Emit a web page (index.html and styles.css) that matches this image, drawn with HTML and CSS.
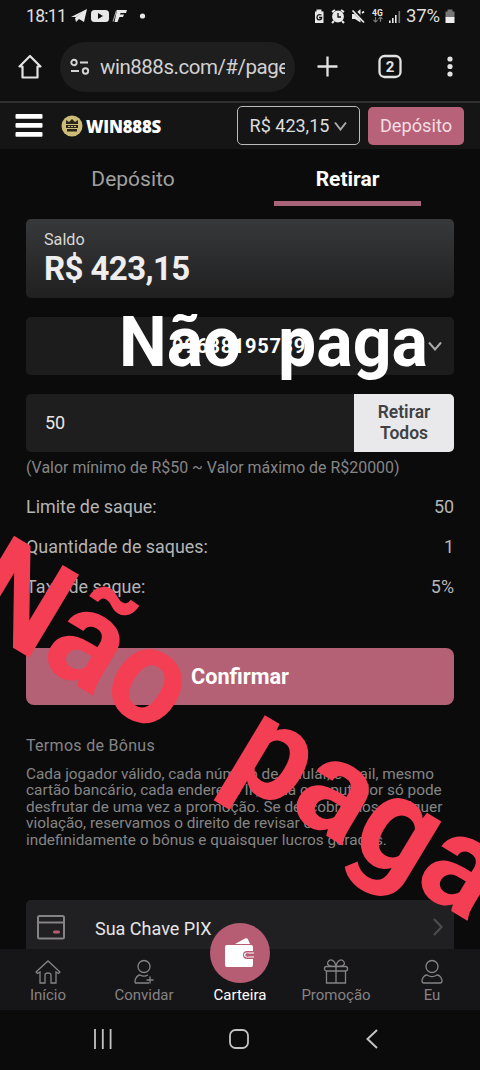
FILE: index.html
```html
<!DOCTYPE html>
<html lang="pt-BR">
<head>
<meta charset="utf-8">
<title>WIN888S</title>
<link rel="stylesheet" href="styles.css">
</head>
<body>
<div class="phone">
  <div class="status">
    <span class="clock">18:11</span>
    <svg width="78" height="18" viewBox="0 0 78 18" fill="#e8e8e8">
      <path d="M0 10 16 2l-3 13-5-3-3 3-1-4 9-7-8 6z"/>
      <rect x="20" y="3" width="18" height="12" rx="3.5"/><path d="m27 6 5 3-5 3z" fill="#101010"/>
      <path d="M46 3h10l-1 3h-5.500l-.5 1.500h4L52 10h-3.500L46.500 15h-3z"/><path d="M45.500 3.500 42 14.500" stroke="#bbb" stroke-width="1"/>
      <circle cx="71.500" cy="9" r="2.600"/>
    </svg>
    <span class="grow"></span>
    <svg width="90" height="18" viewBox="0 0 90 18" fill="#e8e8e8">
      <path d="M1 4.500h1.500v-2h5v2H9.500v11.500H1z"/><path d="M7.500 8c-3-1-4.500 0-4.500 2.500 0 1.500 1 2.300 2.300 2.300s2.300-1 2.300-2.300H5" fill="none" stroke="#101010" stroke-width="1.300"/>
      <circle cx="24" cy="9.500" r="5.900"/><path d="m18 5 3-2M30 5l-3-2M20 14l-2 2M28 14l2 2" stroke="#e8e8e8" stroke-width="2"/><path d="M24 6v4h3" fill="none" stroke="#101010" stroke-width="1.300"/>
      <path d="M38 7h3l5.500-5v13.500L41 12h-3z"/><path d="m38.500 2.500 12 12" stroke="#101010" stroke-width="3.500"/><path d="m38.500 3.500 11.500 12M48 6l2-1.500" stroke="#e8e8e8" stroke-width="1.800"/>
      <text x="58" y="8.500" class="net">4G</text>
      <path d="M61.500 10v5M59.500 13l2 2 2-2M66.500 15v-5M64.500 12l2-2 2 2" fill="none" stroke="#777" stroke-width="1.100"/>
      <path d="M75 13.500h1.600v2.500H75zM78 11h1.600v5H78zM81 8h1.600v8H81z"/><path d="M84.500 4h1.600v12h-1.600z" fill="#777"/>
    </svg>
    <span class="percent">37%</span>
    <svg width="10" height="16" viewBox="0 0 10 16"><path d="M2.500 1.500h5v2h2v6H.5v-6h2z" fill="#777"/><path d="M.5 9h9v6H.5z" fill="#eee"/></svg>
  </div>

  <div class="browser">
    <svg class="home" width="24" height="26" viewBox="0 0 24 26" fill="none" stroke="#e2e2e2" stroke-width="2.200" stroke-linejoin="round"><path d="M1.500 12.500 12 2l10.500 10.500H19.500V23.500h-15v-11z"/></svg>
    <div class="address">
      <svg width="20" height="18" viewBox="0 0 20 18" fill="none" stroke="#d5d5d5" stroke-width="1.900"><circle cx="4" cy="4.500" r="2.700"/><path d="M10 4.500h8M1 13h8"/><circle cx="15.500" cy="13" r="2.700"/></svg>
      <span class="url">win888s.com/#/page</span>
    </div>
    <svg class="tools" width="140" height="28" viewBox="0 0 140 28" fill="none" stroke="#e2e2e2" stroke-width="2.300">
      <path d="M.5 13.500h20M10.500 3.500v20"/><rect x="62.500" y="3" width="21" height="21" rx="5"/><text x="73" y="18.800" class="tabs">2</text>
      <g fill="#e2e2e2" stroke="none"><circle cx="133" cy="6" r="2.600"/><circle cx="133" cy="13.500" r="2.600"/><circle cx="133" cy="21" r="2.600"/></g>
    </svg>
  </div>

  <header class="header">
    <svg width="28" height="26" viewBox="0 0 28 26" fill="#fff"><rect x=".5" y="1" width="27" height="4.800" rx="1"/><rect x=".5" y="10" width="27" height="4.800" rx="1"/><rect x=".5" y="19" width="27" height="4.800" rx="1"/></svg>
    <svg class="logo" width="22" height="22" viewBox="0 0 22 22"><circle cx="11" cy="11" r="10.500" fill="#cdbb78"/><path d="m5 5 3 2 3-3 3 3 3-2v4H5zM5 10h12v3H5zM6 14h10v2.500H6z" fill="#29251a"/><path d="M7 11.500h2m1 0h2m1 0h2" stroke="#cdbb78"/></svg>
    <span class="brand">WIN888S</span>
    <div class="balance">R$ 423,15 <svg width="13" height="10" viewBox="0 0 13 10" fill="none" stroke="#aaa" stroke-width="2"><path d="m1 1.500 5.500 7 5.500-7"/></svg></div>
    <div class="deposit">Depósito</div>
  </header>

  <main class="main">
    <nav class="switch"><span class="tab">Depósito</span><span class="tab active">Retirar</span></nav>
    <section class="saldo"><div class="label">Saldo</div><div class="amount">R$ 423,15</div></section>
    <div class="account"><span>09638195739</span><svg width="14" height="10" viewBox="0 0 14 10" fill="none" stroke="#aaa" stroke-width="2"><path d="m1 1.500 6 7 6-7"/></svg></div>
    <div class="withdraw"><div class="value">50</div><div class="all">Retirar<br>Todos</div></div>
    <p class="hint">(Valor mínimo de R$50 ~ Valor máximo de R$20000)</p>
    <div class="facts">
      <div class="row"><span>Limite de saque:</span><span>50</span></div>
      <div class="row"><span>Quantidade de saques:</span><span>1</span></div>
      <div class="row"><span>Taxa de saque:</span><span>5%</span></div>
    </div>
    <div class="confirm">Confirmar</div>
    <h2 class="terms-title">Termos de Bônus</h2>
    <p class="terms">Cada jogador válido, cada número de celular, e-mail, mesmo<br>cartão bancário, cada endereço IP, cada computador só pode<br>desfrutar de uma vez a promoção. Se descobrirmos qualquer<br>violação, reservamos o direito de revisar ou<br>indefinidamente o bônus e quaisquer lucros gerados.</p>
    <div class="pix">
      <svg width="28" height="25" viewBox="0 0 28 25" fill="none" stroke="#858386" stroke-width="2"><rect x="1" y="1" width="26" height="22.500" rx="1.500"/><path d="M1 7.500h26"/><path d="M17.500 17h4" stroke="#b65d73" stroke-width="3" stroke-linecap="round"/></svg>
      <span>Sua Chave PIX</span>
      <svg width="12" height="20" viewBox="0 0 12 20" fill="none" stroke="#4c4b4d" stroke-width="2.200"><path d="m2 2 7.500 8L2 18"/></svg>
    </div>
  </main>

  <nav class="bottom">
    <div class="item"><svg width="26" height="26" viewBox="0 0 26 26"><path d="M1 13 13 2l12 11-1.500 1.500L21 13v11h-5v-8q0-2-3-2t-3 2v8H5V13l-2.500 1.500z"/></svg><span>Início</span></div>
    <div class="item"><svg width="26" height="26" viewBox="0 0 26 26"><circle cx="13" cy="7.500" r="6"/><path d="M18 24H4.500c-1.500-2 1-8 4.500-8 2.500 1.500 5.500 1.500 8 0M15.500 21h7M19 17.500v7"/></svg><span>Convidar</span></div>
    <div class="item current"><div class="wallet"><svg width="32" height="32" viewBox="0 0 32 32"><path d="m11 7 10-5.500q2-1 3 1L26 7z" fill="#fff"/><path d="M3 8h24q2 0 2 2v4h-6q-4 0-4 4t4 4h6v6q0 2-2 2H3q-2 0-2-2V10q0-2 2-2z" fill="#fff"/><path d="M30 15.500h-7.500a2.500 2.500 0 0 0 0 5H30z" fill="#fff"/><path d="M23 16.500h7v3h-7z" fill="#b65d73"/><circle cx="23" cy="18" r="1.700" fill="#b65d73"/></svg></div><span>Carteira</span></div>
    <div class="item"><svg width="26" height="26" viewBox="0 0 26 26"><rect x="1.500" y="7.500" width="23" height="4.500" rx="2"/><path d="M3.500 12v12h19V12M13 7.500V24M13 7.500C9 7.500 3 7 5 3s7-2 8 4.500c1-6.500 6-8.500 8-4.500s-4 4.500-8 4.500z"/></svg><span>Promoção</span></div>
    <div class="item"><svg width="26" height="26" viewBox="0 0 26 26"><circle cx="13" cy="7.500" r="6"/><path d="M8 16c3 2 7 2 10 0 3 0 5 3.500 5 6q0 2-2 2H5q-2 0-2-2c0-2.500 2-6 5-6z"/></svg><span>Eu</span></div>
  </nav>

  <footer class="system">
    <svg width="20" height="20" viewBox="0 0 20 20" stroke="#c2c2c2" stroke-width="1.800"><path d="M2 0v20M9.800 0v20M17.600 0v20"/></svg>
    <svg width="20" height="20" viewBox="0 0 20 20" fill="none" stroke="#c2c2c2" stroke-width="1.800"><rect x="1" y="1" width="18" height="18" rx="5.500"/></svg>
    <svg width="14" height="20" viewBox="0 0 14 20" fill="none" stroke="#c2c2c2" stroke-width="2"><path d="M12 1 2.500 10 12 19"/></svg>
  </footer>

  <svg class="stamps" width="480" height="1070" viewBox="0 0 480 1070">
    <g class="stamp" fill="#fff"><text x="119" y="365.500" textLength="122" lengthAdjust="spacingAndGlyphs">Não</text><text x="278" y="365.500" textLength="150" lengthAdjust="spacingAndGlyphs">paga</text></g>
    <g class="stamp" fill="#f43e54" transform="translate(31 658.500) rotate(31) scale(1.940) translate(-163.300 -365.500)"><text x="119" y="365.500" textLength="122" lengthAdjust="spacingAndGlyphs">Não</text><text x="278" y="365.500" textLength="150" lengthAdjust="spacingAndGlyphs">paga</text></g>
  </svg>
</div>
</body>
</html>
```
FILE: styles.css
```css
* { box-sizing: border-box; }
body { margin: 0; background: #0b0b0c; color: #b5b5b5; font-family: Roboto, "Liberation Sans", sans-serif; }
svg { display: block; flex: none; }
.phone { position: relative; display: flex; flex-direction: column; width: 480px; height: 1070px; overflow: hidden; }
.status { display: flex; flex: none; align-items: center; height: 32px; padding: 0 25px 0 26px; background: #101010; color: #dedede; font-size: 17.500px; }
.clock { width: 45px; white-space: nowrap; letter-spacing: -.7px; }
.grow { flex: 1; }
.percent { width: 37px; margin: 0 2px 0 2px; font-size: 18.500px; letter-spacing: -.2px; }
.net { font: bold 8.500px Roboto, sans-serif; }
.browser { display: flex; flex: none; align-items: center; height: 69px; padding: 0 18px; background: #101010; }
.address { display: flex; align-items: center; gap: 10px; width: 235px; height: 50px; margin-left: 18px; padding: 0 10px; border-radius: 25px; background: #1e1e1f; }
.url { width: 185px; overflow: hidden; color: #d2d2d2; font-size: 20.500px; line-height: 30px; white-space: nowrap; letter-spacing: -.48px; }
.tools { margin-left: 22px; }
.tabs { fill: #e2e2e2; stroke: none; font: bold 15px Roboto, sans-serif; text-anchor: middle; }
.header { display: flex; flex: none; align-items: center; height: 48px; padding: 0 15px; border-top: 2px solid #303031; background: #151516; }
.logo { margin-left: 18px; }
.brand { width: 78px; margin-left: 3px; color: #fff; font: 800 16.800px "Open Sans", sans-serif; letter-spacing: -.2px; }
.balance { display: flex; align-items: center; justify-content: center; gap: 5px; width: 123px; height: 39px; margin: 0 0 1px 73px; border: 1px solid #bbb; border-radius: 5px; color: #ddd; font-size: 18px; white-space: nowrap; }
.deposit { width: 96px; height: 38px; margin: 0 0 1px 8px; border-radius: 5px; background: #b76278; color: #f3dfe4; font-size: 18.200px; line-height: 38px; text-align: center; }
.main { flex: none; height: 800px; padding: 0 26px; overflow: hidden; }
.switch { display: flex; height: 57px; }
.tab { width: 214px; padding-top: 17px; color: #a0a0a0; font-size: 21px; line-height: 26px; text-align: center; }
.active { width: 147px; margin-left: 34px; border-bottom: 5px solid #a86478; color: #fff; font-weight: 700; }
.saldo { height: 79px; margin-top: 13px; padding: 11px 18px; border-radius: 5px; background: linear-gradient(#373839, #202021); }
.label { color: #d8d8d8; font-size: 16.200px; line-height: 20px; }
.amount { color: #eee; font-size: 33px; font-weight: 700; line-height: 37px; letter-spacing: -.6px; }
.account { display: flex; align-items: center; height: 58px; margin-top: 19px; padding-right: 12px; border-radius: 5px; background: #1c1c1d; color: #fff; font-size: 20px; font-weight: 700; }
.account span { flex: 1; padding-left: 24px; letter-spacing: .7px; text-align: center; }
.withdraw { display: flex; height: 58px; margin-top: 19px; border-radius: 5px; overflow: hidden; background: #1e1e1f; }
.value { flex: 1; padding-left: 19px; color: #e7e7e7; font-size: 18px; line-height: 58px; }
.all { width: 100px; padding-top: 8px; background: #e9e9eb; color: #414144; font-size: 17.500px; font-weight: 600; line-height: 21px; text-align: center; }
.hint { margin: 6px 0 0; color: #858585; font-size: 15.950px; line-height: 20px; white-space: nowrap; }
.facts { margin-top: 9px; }
.row { display: flex; justify-content: space-between; height: 40.200px; font-size: 17.900px; line-height: 40px; }
.confirm { height: 57px; margin-top: 40px; border-radius: 8px; background: #b56175; color: #fff; font-size: 21.700px; font-weight: 700; line-height: 57px; text-align: center; }
.terms-title { margin: 31px 0 0; color: #858585; font-size: 16px; font-weight: 400; line-height: 20px; letter-spacing: .3px; }
.terms { margin: 10px 0 0; color: #858585; font-size: 15.350px; line-height: 16.500px; white-space: nowrap; }
.pix { display: flex; align-items: center; height: 56px; margin-top: 52px; padding: 0 10px 2px 11px; border-radius: 5px 5px 0 0; background: #201f21; color: #e6e6e6; font-size: 18px; }
.pix span { flex: 1; padding: 2px 0 0 30px; }
.bottom { display: flex; flex: none; height: 61px; background: #161517; }
.item { display: flex; flex-direction: column; align-items: center; width: 96px; padding-top: 10px; color: #858386; font-size: 15px; line-height: 20px; fill: none; stroke: #858386; stroke-width: 1.300; }
.current { color: #fff; padding-top: 0; stroke: none; }
.wallet { display: flex; flex: none; align-items: center; justify-content: center; width: 60px; height: 60px; margin: -26px 0 2px; border-radius: 50%; background: #b65d73; }
.system { display: flex; flex: none; align-items: center; height: 61px; padding: 0 101px 4px 93px; justify-content: space-between; }
.stamps { position: absolute; top: 0; left: 0; }
.stamp { font-size: 70px; font-weight: 700; }
```
